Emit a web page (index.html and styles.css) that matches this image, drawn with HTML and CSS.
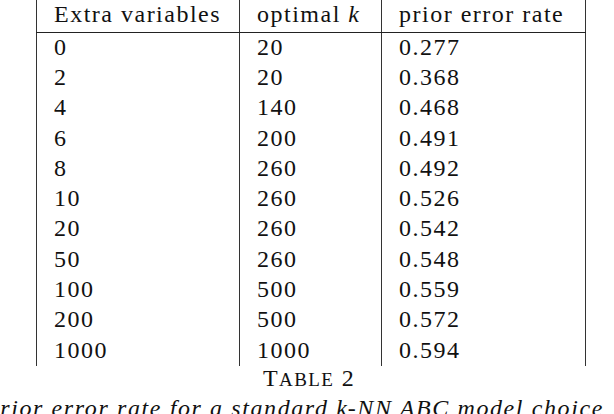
FILE: index.html
```
<!DOCTYPE html>
<html>
<head>
<meta charset="utf-8">
<link rel="stylesheet" href="styles.css">
</head>
<body>
<div class="page">
  <table class="tbl">
    <thead>
      <tr><th class="c1">Extra variables</th><th class="c2">optimal <i>k</i></th><th class="c3">prior error rate</th></tr>
    </thead>
    <tbody>
      <tr><td>0</td><td>20</td><td>0.277</td></tr>
      <tr><td>2</td><td>20</td><td>0.368</td></tr>
      <tr><td>4</td><td>140</td><td>0.468</td></tr>
      <tr><td>6</td><td>200</td><td>0.491</td></tr>
      <tr><td>8</td><td>260</td><td>0.492</td></tr>
      <tr><td>10</td><td>260</td><td>0.526</td></tr>
      <tr><td>20</td><td>260</td><td>0.542</td></tr>
      <tr><td>50</td><td>260</td><td>0.548</td></tr>
      <tr><td>100</td><td>500</td><td>0.559</td></tr>
      <tr><td>200</td><td>500</td><td>0.572</td></tr>
      <tr><td>1000</td><td>1000</td><td>0.594</td></tr>
    </tbody>
  </table>
  <div class="label">T<span class="sc">ABLE</span> 2</div>
  <div class="caption">Prior error rate for a standard <i class="k">k</i>-NN ABC model choice</div>
</div>
</body>
</html>
```
FILE: styles.css
```
html, body {
  margin: 0;
  padding: 0;
  background: #fff;
  overflow: hidden;
}
body {
  width: 614px;
  height: 414px;
  font-family: "Liberation Serif", serif;
  color: #111;
  font-size: 24px;
}
.page {
  display: flex;
  flex-direction: column;
  align-items: flex-start;
}
.tbl {
  border-collapse: collapse;
  margin-left: 36px;
  letter-spacing: 1.5px;
}
.tbl th, .tbl td {
  font-weight: normal;
  text-align: left;
  padding: 0 0 3px 17px;
  border-left: 1.3px solid #333;
  border-right: 1.3px solid #333;
  white-space: nowrap;
  line-height: 1;
  vertical-align: middle;
}
.tbl th {
  height: 27px;
  padding-bottom: 5px;
  border-bottom: 1.3px solid #222;
}
.tbl td {
  height: 27.3px;
}
.c1 { width: 185px; }
.c2 { width: 124px; }
.c3 { width: 186px; }
.tbl i { letter-spacing: 0; }
.label {
  align-self: center;
  margin-left: 4px;
  margin-top: 0;
  font-size: 24px;
  line-height: 24px;
  letter-spacing: 1.4px;
}
.sc {
  font-size: 19px;
}
.caption {
  font-style: italic;
  white-space: nowrap;
  margin-left: -16px;
  margin-top: 3px;
  font-size: 24px;
  letter-spacing: 1.6px;
}
.caption .k { letter-spacing: 1px; }
```
